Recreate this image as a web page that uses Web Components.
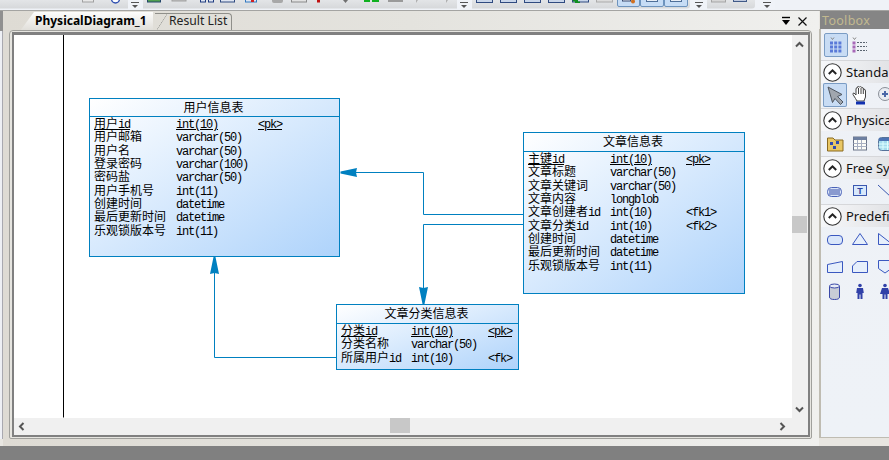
<!DOCTYPE html>
<html>
<head>
<meta charset="utf-8">
<title>PhysicalDiagram_1</title>
<style>
html, body {
	margin: 0;
	height: 460px;
	overflow: hidden;
	font-family: "Noto Sans", "Noto Sans CJK SC", sans-serif;
}
</style>
</head>
<body>
<app-shell>
	<tool-strip slot="top"></tool-strip>
	<doc-pane slot="doc">
		<diagram-view>
			<svg class="links" xmlns="http://www.w3.org/2000/svg" viewBox="14 35 778 383" width="778" height="383" style="position:absolute;left:0;top:0">
				<path d="M63.5 35V417.5" stroke="#000" fill="none"/>
				<path d="M523 214.5H423.5V172.5H350M523 224.5H423.5V295M336 357.5H214.5V267" stroke="#0080c0" fill="none"/>
				<path d="M340.5 171.5V173.5L357 177L356 172.5L357 168Z" fill="#0080c0"/>
				<path d="M422.5 304H424.5L428 287L423.5 288L419 287Z" fill="#0080c0"/>
				<path d="M213.5 257H215.5L219 274L214.5 273L210 274Z" fill="#0080c0"/>
			</svg>
			<db-table title="用户信息表" style="left:75px;top:63px;width:251px;height:159px;--title-height:17px;--col1:82px;--col2:82px">
				<db-row name="用户id" type="int(10)" key="&lt;pk&gt;" primary></db-row>
				<db-row name="用户邮箱" type="varchar(50)"></db-row>
				<db-row name="用户名" type="varchar(50)"></db-row>
				<db-row name="登录密码" type="varchar(100)"></db-row>
				<db-row name="密码盐" type="varchar(50)"></db-row>
				<db-row name="用户手机号" type="int(11)"></db-row>
				<db-row name="创建时间" type="datetime"></db-row>
				<db-row name="最后更新时间" type="datetime"></db-row>
				<db-row name="乐观锁版本号" type="int(11)"></db-row>
			</db-table>
			<db-table title="文章信息表" style="left:509px;top:97px;width:222px;height:162px;--col1:82px;--col2:76px">
				<db-row name="主键id" type="int(10)" key="&lt;pk&gt;" primary></db-row>
				<db-row name="文章标题" type="varchar(50)"></db-row>
				<db-row name="文章关键词" type="varchar(50)"></db-row>
				<db-row name="文章内容" type="longblob"></db-row>
				<db-row name="文章创建者id" type="int(10)" key="&lt;fk1&gt;"></db-row>
				<db-row name="文章分类id" type="int(10)" key="&lt;fk2&gt;"></db-row>
				<db-row name="创建时间" type="datetime"></db-row>
				<db-row name="最后更新时间" type="datetime"></db-row>
				<db-row name="乐观锁版本号" type="int(11)"></db-row>
			</db-table>
			<db-table title="文章分类信息表" style="left:322px;top:269px;width:183px;height:66px;--col1:70px;--col2:77px">
				<db-row name="分类id" type="int(10)" key="&lt;pk&gt;" primary></db-row>
				<db-row name="分类名称" type="varchar(50)"></db-row>
				<db-row name="所属用户id" type="int(10)" key="&lt;fk&gt;"></db-row>
			</db-table>
		</diagram-view>
	</doc-pane>
	<toolbox-panel slot="side">
		<toolbox-section label="Standard">
			<tool-icon name="arrow" selected></tool-icon>
			<tool-icon name="hand"></tool-icon>
			<tool-icon name="zoom"></tool-icon>
		</toolbox-section>
		<toolbox-section label="Physical Diagram">
			<tool-icon name="folder"></tool-icon>
			<tool-icon name="table"></tool-icon>
			<tool-icon name="view"></tool-icon>
		</toolbox-section>
		<toolbox-section label="Free Symbols">
			<tool-icon name="note"></tool-icon>
			<tool-icon name="text"></tool-icon>
			<tool-icon name="line"></tool-icon>
		</toolbox-section>
		<toolbox-section label="Predefined Symbols">
			<tool-icon name="rounded"></tool-icon>
			<tool-icon name="triangle"></tool-icon>
			<tool-icon name="corner"></tool-icon>
			<tool-icon name="slope"></tool-icon>
			<tool-icon name="cut"></tool-icon>
			<tool-icon name="shield"></tool-icon>
			<tool-icon name="cylinder"></tool-icon>
			<tool-icon name="person"></tool-icon>
			<tool-icon name="person2"></tool-icon>
		</toolbox-section>
	</toolbox-panel>
</app-shell>

<script>
const TOOL_ICONS = {
	arrow: '<path d="M5 4L19 11.5L14.5 13.5L20 19L17.5 21.5L12 15.5L9.5 19.5Z" fill="#a0a6ae" stroke="#4f5660"/>',
	hand: '<path d="M7.5 15.5L5 11.5Q4.5 10 6 10L8 12V6Q8 4.8 9.2 5V4Q10.2 3 11.4 4Q12.8 3 13.8 4.5Q15.5 4.5 15.5 6Q17.5 6 17.5 8V14L16 18H9Z" fill="#fff" stroke="#444"/><path d="M10.5 5V11M13 5V11M15.3 6V11" stroke="#444" fill="none"/><rect x="8" y="18.5" width="9" height="3" fill="#1030b0"/>',
	zoom: '<circle cx="12" cy="11" r="6.5" fill="#e8ecf2" stroke="#8a8f98"/><path d="M9 11H15M12 8V14" stroke="#4a68a8" stroke-width="2"/>',
	folder: '<path d="M4.5 7H10L12 9H20V20H4.5Z" fill="#e9c765" stroke="#8a6a20"/><rect x="7" y="11" width="3" height="3" fill="#2f4bb0"/><rect x="13" y="10" width="3" height="3" fill="#2f4bb0"/><rect x="10" y="15" width="3" height="3" fill="#2f4bb0"/>',
	table: '<rect x="5.5" y="6" width="13" height="13" fill="#fdfdf8" stroke="#6a7488"/><rect x="5.5" y="6" width="13" height="3" fill="#6d7fa0"/><path d="M5.5 12.5H18.5M5.5 15.5H18.5M9.5 9V19M13.5 9V19" stroke="#a8b0c2" fill="none"/>',
	view: '<rect x="5.5" y="6.5" width="14" height="13" rx="3" fill="#a6dcee" stroke="#55729a"/><rect x="6" y="7" width="13" height="3" fill="#4c74b4"/><path d="M5.5 13H19.5M5.5 16H19.5M10 10V19M14.5 10V19" stroke="#dff" fill="none"/>',
	note: '<rect x="4.5" y="8.5" width="14" height="9" rx="4" fill="#d9e4f7" stroke="#4a62b8"/><path d="M6 11H17M6 13H17M6 15H17" stroke="#3a50a8"/>',
	text: '<rect x="5.5" y="6.5" width="13" height="10" fill="#d8e8fb" stroke="#3a58b0"/><text x="12" y="15" font-family="Liberation Sans" font-weight="700" font-size="9" text-anchor="middle" fill="#2a44a0">T</text>',
	line: '<path d="M5 6L18 18" stroke="#3a58b0" fill="none"/>',
	rounded: '<rect x="4.5" y="8.5" width="15" height="9" rx="3.5" fill="#d9e6fa" stroke="#3a58c0"/>',
	triangle: '<path d="M12 6.5L19.5 17.5H4.5Z" fill="#e6effb" stroke="#3a58c0"/>',
	corner: '<path d="M5.5 6.5L19.5 17.5H5.5Z" fill="#e6effb" stroke="#3a58c0"/>',
	slope: '<path d="M4.5 11.5L19.5 8.5V19.5H4.5Z" fill="#e6effb" stroke="#3a58c0"/>',
	cut: '<path d="M9 8.5H19.5V19.5H4.5V13Z" fill="#e6effb" stroke="#3a58c0"/>',
	shield: '<path d="M5.5 7.5H18.5V15.5L12 20L5.5 15.5Z" fill="#e6effb" stroke="#3a58c0"/>',
	cylinder: '<path d="M6.5 7V18Q6.5 20.5 11.5 20.5Q16.5 20.5 16.5 18V7" fill="#c8ccd6" stroke="#3a48a8"/><ellipse cx="11.5" cy="7" rx="5" ry="2" fill="#e8ecf5" stroke="#3a48a8"/>',
	person: '<circle cx="12" cy="6.5" r="1.8" fill="#3040a8"/><path d="M9 9H15L15.8 14H14.5V20H12.5V15.5H11.5V20H9.5V14H8.2Z" fill="#3040a8"/>',
	person2: '<circle cx="12" cy="6.5" r="1.8" fill="#3040a8"/><path d="M9 9H15L17 15H14.5V20H12.5V15.5H11.5V20H9.5V15H7Z" fill="#3040a8"/>',
};

class AppShell extends HTMLElement {
	constructor() {
		super();
		this.attachShadow({mode: 'open'}).innerHTML = /*html*/`
			<style>
				:host {
					display: grid;
					grid-template-rows: 10px 1px 425px 24px;
					width: 889px;
					height: 460px;
					overflow: hidden;
					background: #e8e6e1;
				}
				.rule { background: #a4a4a2; }
				main { display: flex; min-height: 0; height: 435px; }
				.rail {
					width: 2px;
					flex: none;
					height: 428px;
					background: #eef0f5;
					border-right: 1px solid #a9a9b0;
				}
				.rail::before {
					content: '';
					display: block;
					width: 3px;
					height: 20px;
					background: #909090;
				}
				.status {
					grid-row: 4;
					align-self: end;
					height: 14px;
					background: #808080;
				}
			</style>
			<slot name="top"></slot>
			<div class="rule"></div>
			<main>
				<div class="rail"></div>
				<slot name="doc"></slot>
				<slot name="side"></slot>
			</main>
			<div class="status"></div>
		`;
	}
}

class ToolStrip extends HTMLElement {
	constructor() {
		super();
		const boxes = [476, 500, 524, 548].map(x => `<rect x="${x}.5" y="-3" width="16" height="5.5" fill="#c9d6ea" stroke="#2f4a80"/>`).join('');
		const grips = [128, 457, 692, 760].map(x => {
			const mid = x + 7;
			return `<rect x="${x}" y="0" width="15" height="9" fill="#f0f3f8"/><path d="M${mid - 4} 2.5H${mid + 4}" stroke="#555"/><path d="M${mid - 3} 5H${mid + 3}L${mid} 8Z" fill="#555"/>`;
		}).join('');
		this.attachShadow({mode: 'open'}).innerHTML = /*html*/`
			<style>
				:host { display: block; height: 10px; overflow: hidden; background: #eff2f7; }
				svg { display: block; }
			</style>
			<svg xmlns="http://www.w3.org/2000/svg" width="889" height="10" viewBox="0 0 889 10">
				<defs>
					<linearGradient id="bar" x1="0" y1="0" x2="0" y2="1">
						<stop offset="0" stop-color="#e9ebee"/>
						<stop offset="1" stop-color="#d6d8da"/>
					</linearGradient>
				</defs>
				<rect x="-4" y="-4" width="694" height="12.5" rx="3" fill="url(#bar)"/>
				<rect x="705" y="-4" width="50" height="12.5" rx="3" fill="url(#bar)"/>
				${grips}
				<rect x="82.5" y="-3" width="11" height="5" fill="#e8e8e8" stroke="#a0a0a0"/>
				<circle cx="115.5" cy="-1" r="4" fill="#fff" stroke="#3050b0" stroke-width="1.3"/>
				<rect x="147.5" y="-3" width="13" height="5" fill="#50a050" stroke="#24466a"/>
				<rect x="172" y="-3" width="14" height="4" fill="#c0c0c0" stroke="#a0a0a0"/>
				<rect x="200.5" y="-3" width="5" height="5" fill="#dfe6f2" stroke="#1f3c80"/>
				<rect x="208.5" y="-3" width="5" height="5" fill="#dfe6f2" stroke="#1f3c80"/>
				<rect x="220.5" y="-3" width="14" height="5" fill="#dfe6f2" stroke="#2f4a80"/>
				<rect x="245.5" y="-3" width="11" height="5" fill="#dfe6f2" stroke="#3078c0"/>
				<rect x="251" y="0" width="3" height="2" fill="#d02020"/>
				<rect x="272" y="-3" width="11" height="6" rx="2" fill="#a8a8a8"/>
				<rect x="291.5" y="-3" width="15" height="5" fill="#e2e2e2" stroke="#8a8a8a"/>
				<rect x="317" y="0" width="3" height="2.5" fill="#c01010"/>
				<path d="M343 0H348L345.5 3Z" fill="#707070"/>
				<rect x="364" y="0" width="6" height="2" fill="#10b020"/>
				<rect x="372" y="0" width="7" height="2" fill="#10b020"/>
				<rect x="388" y="-1" width="15" height="3" fill="#9a9a9a"/>
				<path d="M416 0L418 0L416 3Z" fill="#b0b0b0"/>
				<path d="M446 0L448 0L446 3Z" fill="#b0b0b0"/>
				${boxes}
				<rect x="572.5" y="-3" width="16" height="5" fill="#c9d6ea" stroke="#2f4a80"/>
				<path d="M573 0H578V1.5H580V3H575V1.5H573Z" fill="#109020"/>
				<rect x="596.5" y="-3" width="16" height="5" fill="#dcdcdc" stroke="#aaa"/>
				<rect x="617.5" y="-3" width="22" height="9.5" rx="1.5" fill="#c6dcf5" stroke="#6d93bd"/>
				<rect x="640.5" y="-3" width="23" height="9.5" rx="1.5" fill="#c6dcf5" stroke="#6d93bd"/>
				<rect x="664.5" y="-3" width="23" height="9.5" rx="1.5" fill="#c6dcf5" stroke="#6d93bd"/>
				<rect x="622.5" y="-3" width="8" height="4" fill="#e8eef6" stroke="#3a4a70"/>
				<circle cx="633" cy="1.5" r="2" fill="#d07020"/>
				<rect x="646.5" y="-3" width="11" height="4.5" fill="#e8eef6" stroke="#4f6f98"/>
				<rect x="670.5" y="-3" width="11" height="4.5" fill="#e8eef6" stroke="#4f6f98"/>
				<rect x="711.5" y="-3" width="14" height="5" fill="#d6d6d6" stroke="#a5a5a5"/>
				<rect x="733.5" y="-3" width="13" height="4.5" fill="#c0cade" stroke="#405a88"/>
			</svg>
		`;
	}
}

class DocPane extends HTMLElement {
	constructor() {
		super();
		this.attachShadow({mode: 'open'}).innerHTML = /*html*/`
			<style>
				:host {
					display: block;
					position: relative;
					width: 816px;
					height: 435px;
					flex: none;
					background: linear-gradient(90deg, #dedbd4, #e4e3de 50%, #f0f0ee);
				}
				.tabs {
					display: flex;
					height: 20px;
					padding-left: 17px;
					align-items: flex-end;
				}
				.tab {
					box-sizing: border-box;
					font-size: 12px;
					white-space: nowrap;
				}
				.active {
					width: 133px;
					height: 19px;
					padding-left: 15px;
					line-height: 17px;
					font-weight: 700;
					color: #000;
					background: linear-gradient(#fdfdfc, #dfddd8);
					clip-path: polygon(0 100%, 14px 0, 100% 0, 100% 100%);
				}
				.other {
					width: 77px;
					height: 18px;
					margin-left: 2px;
					padding-left: 14px;
					line-height: 14px;
					font-size: 12.2px;
					color: #222;
					border: 1px solid #8f8f8a;
					border-width: 1px 1px 0 0;
					border-radius: 0 4px 0 0;
					position: relative;
				}
				.other::before {
					content: '';
					position: absolute;
					left: 1px;
					top: 0;
					width: 11px;
					height: 17px;
					background: linear-gradient(to bottom right, transparent 48%, #a5a5a0 50%, transparent 54%);
				}
				.buttons {
					margin-left: auto;
					display: flex;
					gap: 6px;
					padding: 0 11px 4px 0;
				}
				svg { display: block; }
			</style>
			<div class="tabs">
				<div class="tab active">PhysicalDiagram_1</div>
				<div class="tab other">Result List</div>
				<div class="buttons">
					<svg width="10" height="10" viewBox="0 0 10 10"><path d="M1 1.5H9" stroke="#000" stroke-width="1.4"/><path d="M1 4H9L5 9Z" fill="#000"/></svg>
					<svg width="11" height="11" viewBox="0 0 11 11"><path d="M1.5 1.5L9.5 9.5M9.5 1.5L1.5 9.5" stroke="#111" stroke-width="1.2"/></svg>
				</div>
			</div>
			<slot></slot>
		`;
	}
}

class DiagramView extends HTMLElement {
	constructor() {
		super();
		this.attachShadow({mode: 'open'}).innerHTML = /*html*/`
			<style>
				:host {
					display: block;
					box-sizing: border-box;
					width: 803px;
					height: 409px;
					margin: -1px 0 0 6px;
					border: 1px solid #a0a09c;
					border-radius: 4px 4px 2px 2px;
					padding: 1px 1px 1px 2px;
					background: #e6e5e0;
					position: relative;
				}
				.inner {
					display: grid;
					grid-template-columns: 778px 16px;
					grid-template-rows: 383px 17px;
					border: solid #808080;
					border-width: 3px 2px 2px 2px;
					background: #f0f0f0;
				}
				.canvas {
					position: relative;
					background: #fff;
					overflow: hidden;
				}
				.vbar, .hbar { display: flex; position: relative; background: #f0f0f0; }
				.vbar { flex-direction: column; align-items: center; justify-content: space-between; padding: 6px 1px 5px 0; box-sizing: border-box; }
				.hbar { align-items: center; justify-content: space-between; padding: 0 6px 0 4px; }
				.thumb { position: absolute; background: #c8c8c8; }
				.vbar .thumb { left: 0; top: 181px; width: 15px; height: 17px; }
				.hbar .thumb { left: 376px; top: 0; width: 20px; height: 15px; }
				svg { display: block; }
			</style>
			<div class="inner">
				<div class="canvas"><slot></slot></div>
				<div class="vbar">
					<svg width="9" height="7" viewBox="0 0 9 7"><path d="M1 5.5L4.5 2L8 5.5" fill="none" stroke="#555" stroke-width="2"/></svg>
					<div class="thumb"></div>
					<svg width="9" height="7" viewBox="0 0 9 7"><path d="M1 1.5L4.5 5L8 1.5" fill="none" stroke="#555" stroke-width="2"/></svg>
				</div>
				<div class="hbar">
					<svg width="7" height="9" viewBox="0 0 7 9"><path d="M5.5 1L2 4.5L5.5 8" fill="none" stroke="#555" stroke-width="2"/></svg>
					<div class="thumb"></div>
					<svg width="7" height="9" viewBox="0 0 7 9"><path d="M1.5 1L5 4.5L1.5 8" fill="none" stroke="#555" stroke-width="2"/></svg>
				</div>
				<div></div>
			</div>
		`;
	}
}

class DbTable extends HTMLElement {
	constructor() {
		super();
		this.attachShadow({mode: 'open'}).innerHTML = /*html*/`
			<style>
				:host {
					display: block;
					position: absolute;
					box-sizing: border-box;
					border: 1px solid #0080c0;
					background: linear-gradient(to bottom right, #fff, #aed3fb);
					color: #000;
				}
				.title {
					height: var(--title-height, 18px);
					padding-right: 2px;
					text-align: center;
					font: 12px/15px "Noto Sans CJK SC", sans-serif;
				}
				.rows {
					border-top: 1px solid #0080c0;
					padding: 0 0 0 4px;
				}
			</style>
			<div class="title"></div>
			<div class="rows"><slot></slot></div>
		`;
		this.shadowRoot.querySelector('.title').textContent = this.getAttribute('title');
	}
}

class DbRow extends HTMLElement {
	constructor() {
		super();
		this.attachShadow({mode: 'open'}).innerHTML = /*html*/`
			<style>
				:host {
					display: grid;
					grid-template-columns: var(--col1) var(--col2) auto;
					height: 13.33px;
					line-height: 11px;
					white-space: nowrap;
					font-size: 12px;
					font-family: "Noto Sans CJK SC", sans-serif;
				}
				:host([primary]) span { text-decoration: underline; }
				i {
					font: normal 12px "Liberation Mono", monospace;
					letter-spacing: -1.2px;
				}
			</style>
			<span class="name"></span>
			<span class="type"></span>
			<span class="key"></span>
		`;
		//latin parts of a cell use the half width font, chinese parts the full width one
		for(const part of ['name', 'type', 'key']) {
			const cell = this.shadowRoot.querySelector(`.${part}`);
			const value = this.getAttribute(part) ?? '';
			for(const chunk of value.match(/[\u4e00-\u9fff]+|[^\u4e00-\u9fff]+/g) ?? []) {
				if(/[\u4e00-\u9fff]/.test(chunk)) {
					cell.appendChild(document.createTextNode(chunk));
				}
				else {
					const latin = document.createElement('i');
					latin.textContent = chunk;
					cell.appendChild(latin);
				}
			}
		}
	}
}

class ToolboxPanel extends HTMLElement {
	constructor() {
		super();
		this.attachShadow({mode: 'open'}).innerHTML = /*html*/`
			<style>
				:host {
					display: block;
					box-sizing: border-box;
					width: 70px;
					height: 435px;
					flex: none;
					background: #e8e6e1;
					overflow: hidden;
				}
				.title {
					height: 18px;
					margin-left: 1px;
					padding-left: 2px;
					background: #858585;
					color: #c2b98f;
					font-size: 12.5px;
					line-height: 20px;
					letter-spacing: 0.3px;
					white-space: nowrap;
				}
				.body {
					box-sizing: border-box;
					width: 71px;
					height: 409px;
					border: solid #bfbcb2;
					border-width: 0 0 1px 2px;
					background: linear-gradient(#eef1f6, #eef2f7);
					overflow: hidden;
				}
				.views {
					display: flex;
					align-items: center;
					height: 32px;
					padding-left: 3px;
				}
				.view {
					box-sizing: border-box;
					width: 24px;
					height: 24px;
					display: grid;
					place-items: center;
				}
				.on {
					border: 1px solid #7a9cc4;
					border-radius: 2px;
					background: #c8dcf4;
				}
				svg { display: block; }
			</style>
			<div class="title">Toolbox</div>
			<div class="body">
				<div class="views">
					<div class="view on">
						<svg width="12" height="17" viewBox="0 0 12 17"><path d="M1 0.5L2.5 2.5L4 0.5" fill="none" stroke="#888"/><path d="M0 6H11.5M0 10H11.5M0 14H11.5" stroke="#5a7ad8" stroke-width="3" stroke-dasharray="3 1.2"/></svg>
					</div>
					<div class="view">
						<svg width="16" height="17" viewBox="0 0 16 17"><path d="M1 0.5L2.5 2.5L4 0.5" fill="none" stroke="#888"/><path d="M0.5 6H3.5M0.5 10H3.5M0.5 14H3.5" stroke="#a868b8" stroke-width="3"/><path d="M5 5.5H15M5 9.5H15M5 13.5H15" stroke="#5a6470" stroke-dasharray="2 1"/></svg>
					</div>
				</div>
				<slot></slot>
			</div>
		`;
	}
}

class ToolboxSection extends HTMLElement {
	constructor() {
		super();
		this.attachShadow({mode: 'open'}).innerHTML = /*html*/`
			<style>
				:host { display: block; }
				.head {
					display: flex;
					align-items: center;
					gap: 4px;
					height: 22px;
					padding-left: 2px;
					background: linear-gradient(90deg, #f6f7f9, #e2e3e6);
					box-shadow: 0 -1px 0 #d6d7da;
					font-size: 13px;
					color: #111;
					white-space: nowrap;
				}
				.icons {
					display: grid;
					grid-template-columns: repeat(3, 25px);
					grid-auto-rows: 26px;
					width: 75px;
					padding: 0 0 0 2px;
				}
				svg { display: block; flex: none; }
			</style>
			<div class="head">
				<svg width="19" height="19" viewBox="0 0 19 19"><circle cx="9.5" cy="9.5" r="8.7" fill="#fff" stroke="#333" stroke-width="1.1"/><path d="M5.8 11L9.5 7.3L13.2 11" fill="none" stroke="#222" stroke-width="2"/></svg>
				<span></span>
			</div>
			<div class="icons"><slot></slot></div>
		`;
		this.shadowRoot.querySelector('span').textContent = this.getAttribute('label');
	}
}

class ToolIcon extends HTMLElement {
	constructor() {
		super();
		this.attachShadow({mode: 'open'}).innerHTML = /*html*/`
			<style>
				:host {
					display: block;
					box-sizing: border-box;
					width: 24px;
					height: 24px;
				}
				:host([selected]) {
					background: #c8dcf4;
					box-shadow: inset 0 0 0 1px #7a9cc4;
					border-radius: 2px;
				}
				svg { display: block; }
			</style>
			<svg xmlns="http://www.w3.org/2000/svg" width="24" height="24" viewBox="0 0 24 24">${TOOL_ICONS[this.getAttribute('name')] ?? ''}</svg>
		`;
	}
}

window.customElements.define('app-shell', AppShell);
window.customElements.define('tool-strip', ToolStrip);
window.customElements.define('doc-pane', DocPane);
window.customElements.define('diagram-view', DiagramView);
window.customElements.define('db-table', DbTable);
window.customElements.define('db-row', DbRow);
window.customElements.define('toolbox-panel', ToolboxPanel);
window.customElements.define('toolbox-section', ToolboxSection);
window.customElements.define('tool-icon', ToolIcon);
</script>
</body>
</html>
